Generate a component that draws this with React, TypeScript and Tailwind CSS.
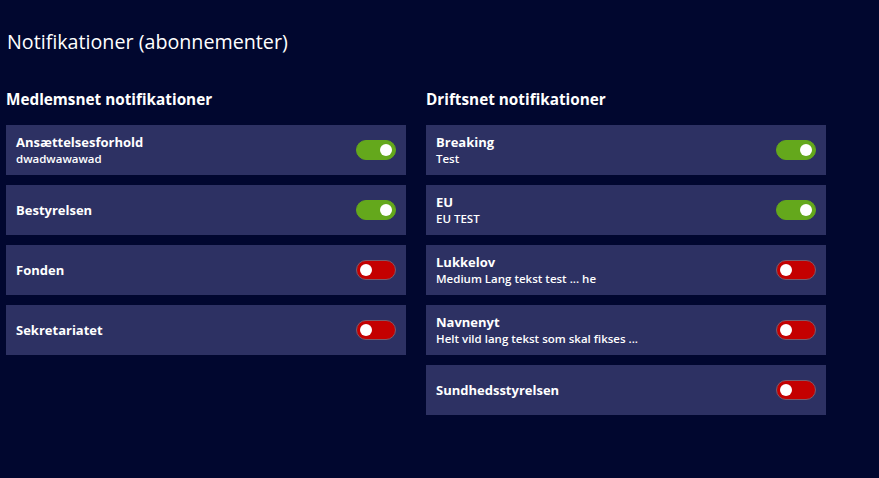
import React, { useState } from 'react';

interface Subscription {
  name: string;
  description?: string;
  enabled: boolean;
}

const memberNotifications: Subscription[] = [
  { name: 'Ansættelsesforhold', description: 'dwadwawawad', enabled: true },
  { name: 'Bestyrelsen', enabled: true },
  { name: 'Fonden', enabled: false },
  { name: 'Sekretariatet', enabled: false },
];

const operationNotifications: Subscription[] = [
  { name: 'Breaking', description: 'Test', enabled: true },
  { name: 'EU', description: 'EU TEST', enabled: true },
  { name: 'Lukkelov', description: 'Medium Lang tekst test ... he', enabled: false },
  { name: 'Navnenyt', description: 'Helt vild lang tekst som skal fikses ...', enabled: false },
  { name: 'Sundhedsstyrelsen', enabled: false },
];

// Toggle switch - green when on, red when off
const Toggle: React.FC<{ on: boolean; onChange: () => void }> = ({ on, onChange }) => (
  <button
    type="button"
    onClick={onChange}
    className={
      on
        ? 'flex items-center justify-end w-10 h-5 rounded-full bg-[#64a81c] border border-[#64a81c] px-[3px]'
        : 'flex items-center justify-start w-10 h-5 rounded-full bg-[#c40000] border border-[#7a5a6a] px-[3px]'
    }
  >
    <span className="block w-3 h-3 rounded-full bg-white" />
  </button>
);

const SubscriptionCard: React.FC<{ item: Subscription; onToggle: () => void }> = ({ item, onToggle }) => (
  <div className="flex items-center justify-between h-[50px] bg-[#2d3163] pl-[10px] pr-[10px]">
    <div className="flex flex-col text-white">
      <span className="text-[13px] font-bold leading-[17px]">{item.name}</span>
      {item.description && <span className="text-[11.5px] font-semibold leading-[15px]">{item.description}</span>}
    </div>
    <Toggle on={item.enabled} onChange={onToggle} />
  </div>
);

const Column: React.FC<{ title: string; initial: Subscription[] }> = ({ title, initial }) => {
  const [items, setItems] = useState(initial);

  const toggle = (idx: number) => {
    setItems(prev => prev.map((it, i) => (i === idx ? { ...it, enabled: !it.enabled } : it)));
  };

  return (
    <div className="w-[400px]">
      <h2 className="text-[15.3px] font-bold text-white leading-5 mb-[16px]">{title}</h2>
      <div className="flex flex-col gap-[10px]">
        {items.map((item, i) => (
          <SubscriptionCard key={item.name} item={item} onToggle={() => toggle(i)} />
        ))}
      </div>
    </div>
  );
};

export default function App() {
  return (
    <div className="min-h-[478px] bg-[#01072f] px-[6px] pt-[28px] font-['Segoe_UI','Open_Sans',sans-serif]">
      <h1 className="text-[19.7px] leading-7 text-white pl-px mb-[33px]">Notifikationer (abonnementer)</h1>
      <div className="flex gap-5 items-start">
        <Column title="Medlemsnet notifikationer" initial={memberNotifications} />
        <Column title="Driftsnet notifikationer" initial={operationNotifications} />
      </div>
    </div>
  );
}
